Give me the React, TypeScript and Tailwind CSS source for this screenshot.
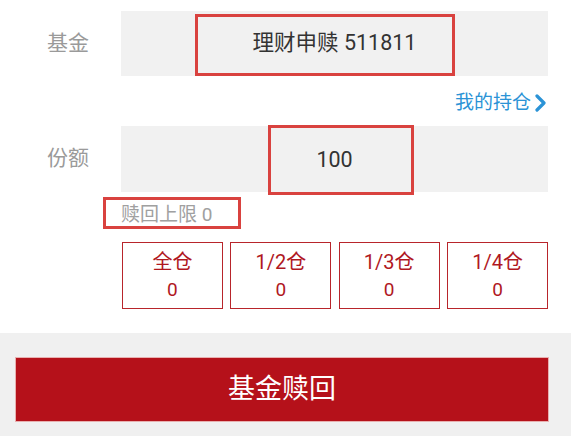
import React from "react";

const quickPicks = [
  { label: "全仓", value: "0" },
  { label: "1/2仓", value: "0" },
  { label: "1/3仓", value: "0" },
  { label: "1/4仓", value: "0" },
];

function ChevronRight() {
  return (
    <svg width="14" height="18" viewBox="0 0 14 18" className="ml-[3px]">
      <polyline
        points="3,2 10,9 3,16"
        fill="none"
        stroke="#2b93d6"
        strokeWidth="3.2"
        strokeLinecap="round"
        strokeLinejoin="round"
      />
    </svg>
  );
}

export default function App() {
  return (
    <div
      className="w-[571px] h-[436px] bg-white flex flex-col overflow-hidden"
      style={{ fontFamily: 'Roboto, "Noto Sans CJK SC", sans-serif' }}
    >
      {/* Form */}
      <div className="h-[333px] pt-[11px]">
        {/* Fund row */}
        <div className="flex h-[65px]">
          <div className="w-[121px] pl-[47px] flex items-center text-[21px] text-[#9a9a9a]">
            基金
          </div>
          <div className="relative w-[427px] bg-[#f1f1f1] flex items-center justify-center text-[21.5px] text-[#333]">
            理财申赎 511811
            <div className="absolute left-[74px] top-[3px] w-[260px] h-[62px] border-[3px] border-[#d9423f]" />
          </div>
        </div>

        {/* My holdings link */}
        <div className="h-[50px] pt-[4px] pr-[23px] flex items-center justify-end text-[19px] text-[#2b93d6]">
          我的持仓
          <ChevronRight />
        </div>

        {/* Amount row */}
        <div className="flex h-[66px]">
          <div className="w-[121px] pl-[47px] flex items-center text-[21px] text-[#9a9a9a]">
            份额
          </div>
          <div className="relative w-[427px] bg-[#f1f1f1] flex items-center justify-center pt-[2px] text-[21.5px] text-[#333]">
            100
            <div className="absolute left-[147px] top-[-1px] w-[146px] h-[70px] border-[3px] border-[#d9423f]" />
          </div>
        </div>

        {/* Redeem limit */}
        <div className="h-[40px] pl-[121px] pt-[5px]">
          <div className="relative h-[32px] flex items-center pt-[4px] text-[19px] text-[#a0a0a0]">
            赎回上限 0
            <div className="absolute left-[-18px] top-0 w-[138px] h-[32px] border-[3px] border-[#d9423f]" />
          </div>
        </div>

        {/* Quick picks */}
        <div className="ml-[122px] mt-[10px] w-[426px] h-[67px] grid grid-cols-4 gap-[7.5px]">
          {quickPicks.map((p) => (
            <div
              key={p.label}
              className="border-[1.5px] border-[#b8252b] flex flex-col items-center justify-center text-[#b0181f] leading-none"
            >
              <span className="text-[20px]">{p.label}</span>
              <span className="text-[19px] mt-[8px]">{p.value}</span>
            </div>
          ))}
        </div>
      </div>

      {/* Submit */}
      <div className="flex-1 bg-[#f0f0f0] pt-[24px] pl-[15px]">
        <button className="w-[534px] h-[65px] bg-[#b5111a] border border-[#e8b0b0] text-white text-[27px] flex items-center justify-center">
          基金赎回
        </button>
      </div>
    </div>
  );
}
